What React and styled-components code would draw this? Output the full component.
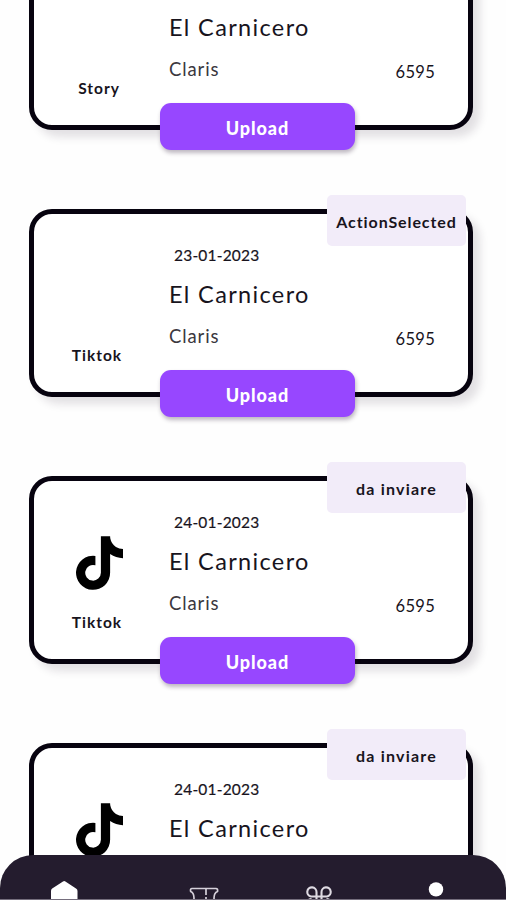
import React, { Component } from 'react';
import styled, { createGlobalStyle } from 'styled-components';
import { FaTiktok } from 'react-icons/fa';

const GlobalStyle = createGlobalStyle`
    * {
        box-sizing: border-box;
    }

    body {
        margin: 0;
        background: #fefefe;
        font-family: Lato, "Open Sans", sans-serif;
        color: #18141d;
    }
`;

const Screen = styled.div`
    position: relative;
    width: 506px;
    height: 900px;
    overflow: hidden;
`;

// the list is already scrolled, the first card is cut by the top of the screen
const CardList = styled.div`
    display: flex;
    flex-direction: column;
    gap: 79px;
    margin: -58px 33px 0 29px;
`;

const Card = styled.div`
    position: relative;
    display: flex;
    flex: none;
    height: 188px;
    border: 5px solid #07030f;
    border-radius: 23px;
    background: #fff;
    box-shadow: 7px 7px 8px rgba(40, 20, 50, 0.13);
`;

const Media = styled.div`
    display: flex;
    flex-direction: column;
    align-items: center;
    justify-content: flex-end;
    width: 130px;
    padding: 0 0 27px;
`;

const MediaIcon = styled(FaTiktok)`
    width: 47px;
    height: 54px;
    margin-bottom: 22px;
    color: #000;
`;

const MediaLabel = styled.div`
    height: 20px;
    margin-left: ${props => props.shift};
    font-size: 15.5px;
    font-weight: 700;
    line-height: 20px;
    letter-spacing: 1px;
`;

const Info = styled.div`
    flex: 1;
    padding: 31px 33px 0 5px;
`;

const CardDate = styled.div`
    height: 20px;
    padding-left: 5px;
    font-size: 15.5px;
    line-height: 20px;
    letter-spacing: 0.2px;
    -webkit-text-stroke: 0.2px;
`;

const Title = styled.div`
    margin-top: 14px;
    font-size: 23.5px;
    line-height: 30px;
    letter-spacing: 1.35px;
`;

const Row = styled.div`
    display: flex;
    justify-content: space-between;
    margin-top: 15px;
    line-height: 24px;
`;

const Owner = styled.span`
    color: #3b383f;
    font-size: 18.5px;
    letter-spacing: 0.9px;
`;

const Code = styled.span`
    padding-top: 3px;
    font-size: 16.5px;
    letter-spacing: 0.3px;
`;

const Badge = styled.div`
    position: absolute;
    top: -19px;
    right: 2px;
    display: flex;
    align-items: center;
    justify-content: center;
    width: 139px;
    height: 51px;
    padding-top: 2px;
    border-radius: 5px;
    background: #f2ecf9;
    font-size: 16px;
    font-weight: 700;
    letter-spacing: ${props => props.spacing};
`;

const UploadButton = styled.button`
    position: absolute;
    bottom: -25px;
    left: 126px;
    width: 195px;
    height: 47px;
    padding: 2px 0 0;
    border: 0;
    border-radius: 11px;
    background: #9747ff;
    box-shadow: 1px 3px 4px rgba(40, 20, 50, 0.3);
    color: #fff;
    font-family: inherit;
    font-size: 18px;
    font-weight: 900;
    letter-spacing: 0.9px;
`;

const NavBar = styled.nav`
    position: absolute;
    left: 0;
    right: 0;
    bottom: 0;
    display: grid;
    grid-template-columns: 129px 150px 80px 154px;
    justify-items: center;
    height: 45px;
    padding-top: 25px;
    overflow: hidden;
    border-radius: 33px 33px 0 0;
    border-bottom: 1px solid #756e7d;
    background: #241c2e;
`;

const NavIcon = styled.svg`
    display: block;
    width: 32px;
    height: 32px;
    color: #fff;
`;

const cards = [
    { media: 'Story' },
    { date: '23-01-2023', media: 'Tiktok', status: 'ActionSelected' },
    { date: '24-01-2023', media: 'Tiktok', status: 'da inviare', icon: true },
    { date: '24-01-2023', status: 'da inviare', icon: true },
];

const ActionCard = ({ date, media, status, icon }) => (
    <Card>
        <Media>
            {icon && <MediaIcon />}
            <MediaLabel shift={media === 'Story' ? '0' : '-4px'}>{media}</MediaLabel>
        </Media>
        <Info>
            <CardDate>{date}</CardDate>
            <Title>El Carnicero</Title>
            {media && (
                <Row>
                    <Owner>Claris</Owner>
                    <Code>6595</Code>
                </Row>
            )}
        </Info>
        {status && <Badge spacing={status === 'ActionSelected' ? '0.9px' : '1.2px'}>{status}</Badge>}
        {media && <UploadButton>Upload</UploadButton>}
    </Card>
);

class App extends Component {
    render() {
        return (
            <Screen>
                <GlobalStyle />
                <CardList>
                    {cards.map((card, i) => <ActionCard key={`card${i}`} {...card} />)}
                </CardList>
                <NavBar>
                    <NavIcon viewBox="0 0 32 32">
                        <path d="M2 11 Q2 9.5 3.2 8.6 L14 1.4 Q15.2 .6 16.4 1.4 L27 8.6 Q28.5 9.5 28.5 11 V32 H2Z" fill="currentColor" />
                    </NavIcon>
                    <NavIcon viewBox="0 0 32 32" fill="none" stroke="#d5d0da" strokeWidth="1.7">
                        <path d="M4 8.5 H28 Q30 8.5 29.5 11.5 Q26 13 26 18 Q26 22 29.5 24 V28 H2.5 V24 Q6 22 6 18 Q6 13 2.7 11.5 Q2 8.5 4 8.5Z" />
                        <path d="M18 9 V28" strokeDasharray="6 2" />
                    </NavIcon>
                    <NavIcon viewBox="0 0 32 32" fill="none" stroke="#dedae2" strokeWidth="2.1">
                        <path d="M13.5 16.5 H8 A4.6 4.6 0 1 1 13.5 12 V24 A5 5 0 1 1 8.5 19 M13.5 16.5 H24 A4.6 4.6 0 1 0 18.5 12 V24 A5 5 0 1 0 23.5 19" />
                    </NavIcon>
                    <NavIcon viewBox="0 0 32 32" fill="currentColor">
                        <circle cx="16" cy="9.4" r="7.2" />
                        <path d="M2 32 Q2 21 16 21 Q30 21 30 32Z" />
                    </NavIcon>
                </NavBar>
            </Screen>
        );
    }
}

export default App;
